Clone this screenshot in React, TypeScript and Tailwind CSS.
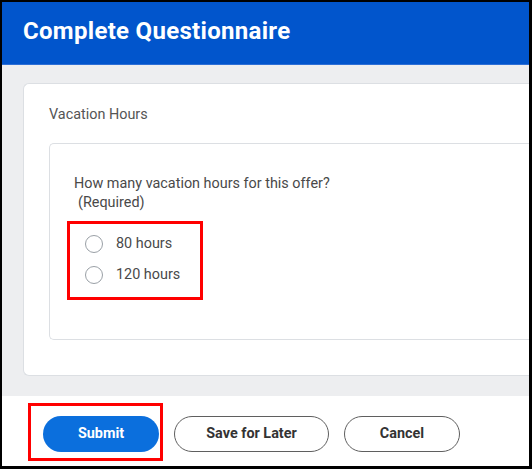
import React from "react";

function Radio({ label }: { label: string }) {
  return (
    <label className="flex items-center h-[31px] cursor-pointer">
      <span className="w-[18px] h-[18px] rounded-full border-[1.5px] border-[#9aa0a6] bg-white shrink-0" />
      <span className="ml-[13px] text-[14.4px] text-[#494949]">{label}</span>
    </label>
  );
}

export default function App() {
  return (
    <div
      className="w-[532px] h-[469px] border-l-2 border-t-2 border-r-[3px] border-b-[3px] border-black overflow-hidden flex flex-col bg-white"
      style={{ fontFamily: "Roboto, 'Liberation Sans', sans-serif" }}
    >
      <div className="h-[63px] shrink-0 bg-[#0155cc] border-b border-[#2d6fd6] flex items-center pl-[21px] pb-[4px]">
        <h1 className="text-white font-bold text-[24px] tracking-[0.3px]">Complete Questionnaire</h1>
      </div>
      <div className="bg-[#edeef0] pt-[18px] pb-[20px] pl-[21px] shrink-0">
        <div className="bg-white border border-[#dcdfe3] rounded-l-[6px] border-r-0 w-[560px] h-[293px] pt-[21px] pl-[25px]">
          <div className="text-[14.4px] text-[#555] leading-[20px]">Vacation Hours</div>
          <div className="mt-[18px] border border-[#dcdfe3] rounded-l-[5px] border-r-0 h-[197px] pt-[30px] pl-[24px]">
            <div className="text-[14.4px] text-[#494949] leading-[19px]">
              How many vacation hours for this offer?
            </div>
            <div className="text-[14.4px] text-[#494949] leading-[19px] pl-[4px]">(Required)</div>
            <div className="mt-[9px] -ml-[7px] w-[136px] border-[3px] border-[#ff0000] pl-[15px] pt-[4px] pb-[7px]">
              <Radio label="80 hours" />
              <Radio label="120 hours" />
            </div>
          </div>
        </div>
      </div>
      <div className="flex-1 bg-white flex items-start pt-[20px] pl-[41px] gap-[15px]">
        <div className="relative">
          <div className="absolute left-[-15px] top-[-13px] w-[135px] h-[58px] border-[3px] border-[#ff0000] pointer-events-none" />
          <button className="w-[116px] h-[36px] rounded-full bg-[#0b6fdd] text-white font-bold text-[14.4px]">
            Submit
          </button>
        </div>
        <button className="w-[155px] h-[36px] rounded-full border border-[#5f5f5f] text-[#333] font-bold text-[14.4px] bg-white">
          Save for Later
        </button>
        <button className="w-[116px] h-[36px] rounded-full border border-[#5f5f5f] text-[#333] font-bold text-[14.4px] bg-white">
          Cancel
        </button>
      </div>
    </div>
  );
}
